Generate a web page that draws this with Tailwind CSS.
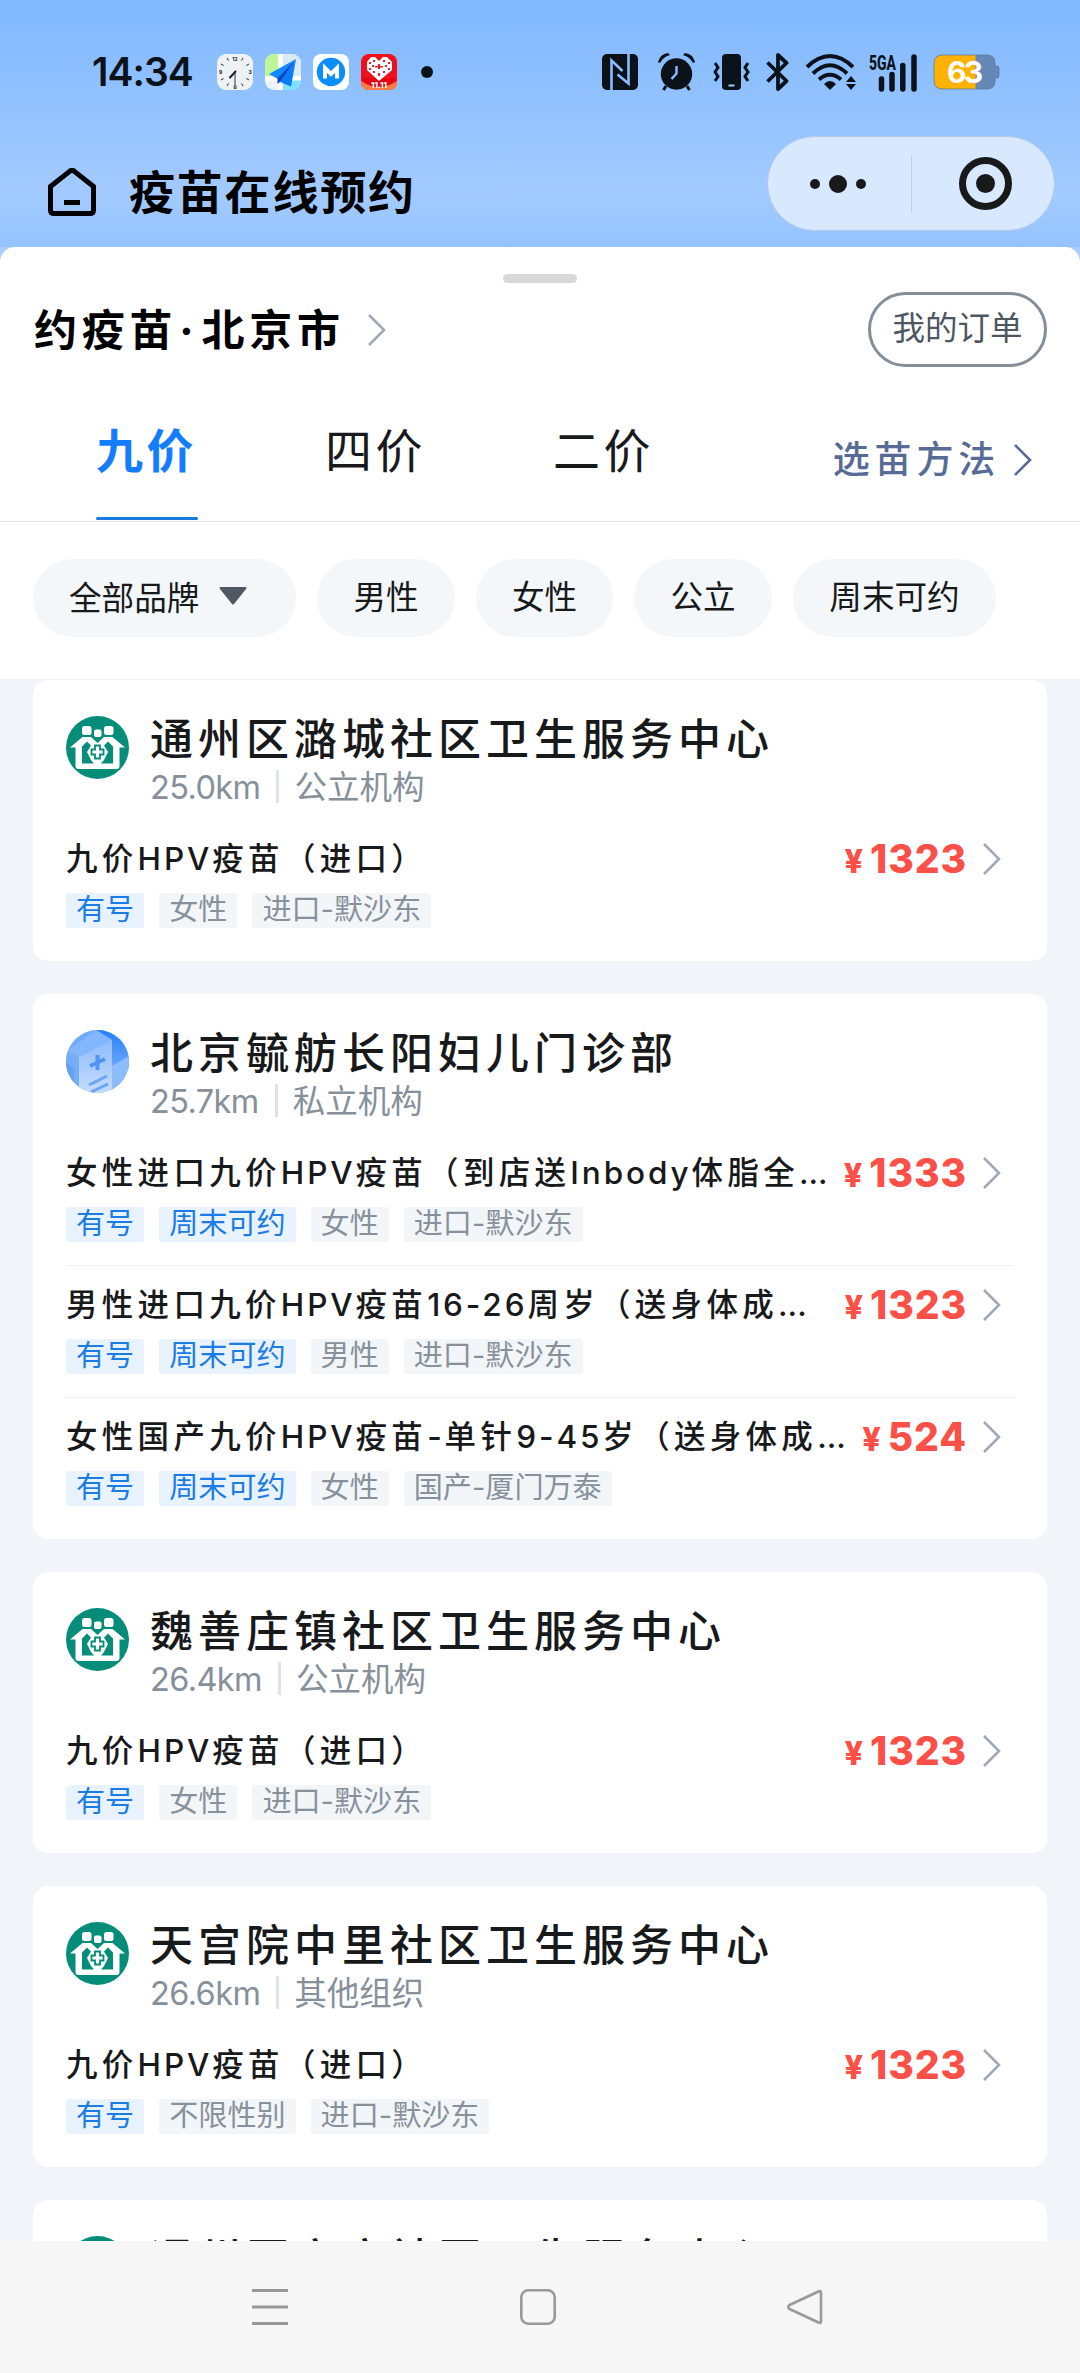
<!DOCTYPE html>
<html lang="zh-CN">
<head>
<meta charset="utf-8">
<title>疫苗在线预约</title>
<script src="https://cdn.jsdelivr.net/npm/@tailwindcss/browser@4"></script>
</head>
<body class="bg-[#f0f4f8]">
<div class="w-[1080px] h-[2373px] overflow-hidden flex flex-col bg-[#a9cdff] text-[#18191b] font-[Inter,'Noto_Sans_CJK_SC',sans-serif] whitespace-nowrap">

  <header class="h-[247px] shrink-0 bg-linear-to-b from-[#80b8ff] via-[#a2caff] via-78% to-[#95c3ff] flex flex-col">
    <!-- status bar -->
    <div class="h-[136px] flex items-center pl-[92px] pr-[80px] pb-2 pt-4">
      <span class="w-[125px] text-[39px] leading-[40px] font-semibold tracking-[-1px] text-[#0b121a]">14:34</span>
      <div class="flex gap-3 items-center">
        <svg class="size-9" viewBox="0 0 36 36"><rect width="36" height="36" rx="9" fill="#eff2f5"/><g stroke="#222" stroke-width="1"><path d="M10 4l1.500 2.600M26 4l-1.500 2.600M4 10l2.600 1.500M32 10l-2.600 1.500M4 26l2.600-1.500M32 26l-2.600-1.500M10 32l1.500-2.600M26 32l-1.500-2.600"/></g><g font-size="5" font-weight="700" text-anchor="middle" fill="#111" font-family="Inter"><text x="18" y="6.500">12</text><text x="33" y="20">3</text><text x="18" y="34.500">6</text><text x="3.500" y="20">9</text></g><path d="M18 18v14" stroke="#777" stroke-width="1.600"/><path d="M18.500 17.500l-5.500 6" stroke="#1a2330" stroke-width="2" stroke-linecap="round"/></svg>
        <svg class="size-9" viewBox="0 0 36 36"><defs><clipPath id="mp"><rect width="36" height="36" rx="9"/></clipPath></defs><g clip-path="url(#mp)"><path fill="#eef3f8" d="M0 0h36v36H0z"/><path fill="#bdf695" d="M0 0h13v23H0z"/><path fill="#7fe3ff" d="M18 26h18v10H18z"/><path fill="#dbe9f2" d="M18 0h18v22H18z"/><path fill="#fff" d="M13 0h4.500v36H13zM0 22h36v4.500H0z"/></g><path fill="#1388ff" d="M31 5L4 20l9 5z"/><path fill="#0a7cf8" d="M31 5L15 28l11 4.500z"/><path fill="#0647c9" d="M31 5L12.500 24.500V30l3.500-3z"/></svg>
        <svg class="size-9" viewBox="0 0 36 36"><rect width="36" height="36" rx="8" fill="#fff"/><circle cx="18" cy="18" r="14.200" fill="#0a8dff"/><path d="M12 24.500V14l6 6 6-6v10.500" fill="none" stroke="#fff" stroke-width="4"/></svg>
        <svg class="size-9" viewBox="0 0 36 36"><rect width="36" height="36" rx="8" fill="#f0101c"/><path d="M0 27q18 12 36 0v1q0 8-8 8H8q-8 0-8-8z" fill="#ff7a45"/><path d="M2 27q16 12 32 0v-3H2z" fill="#e60012"/><path d="M18 27L6 16V8l4-5h4l4 4 4-4h4l5 5v8z" fill="#fff"/><g fill="#e8202a"><path d="M17 10h2v5h-2zM14 12h8v1.500h-8zM8 8h2v2H8zM12 6h2v2h-2zM22 6h2v2h-2zM27 8h2v2h-2zM8 14h2v2H8zM12 17h2v2h-2zM22 17h2v2h-2zM27 14h2v2h-2zM17 19h2v3h-2zM11 11h2v2h-2zM24 11h2v2h-2z"/></g><text x="18" y="34" font-size="8" font-weight="800" text-anchor="middle" fill="#fff" font-family="Inter">11.11</text></svg>
        <span class="ml-3 size-3 rounded-full bg-[#0b121a]"></span>
      </div>
      <div class="ml-auto flex items-center text-[#0b121a]">
        <svg class="w-9 h-9" viewBox="0 0 36 36"><rect width="36" height="36" rx="5" fill="currentColor"/><path d="M9.500 36V6.500L20.500 17M26.500 0v29.500L15.500 20.500" fill="none" stroke="#8abcff" stroke-width="2.600"/></svg>
        <svg class="ml-5 w-[37px] h-[38px]" viewBox="0 0 37 38" fill="none" stroke="currentColor"><circle cx="18.500" cy="21" r="15.700" fill="currentColor" stroke="none"/><path d="M0 9Q2 1 10 0l2 2Q5 4 2 10zM37 9Q35 1 27 0l-2 2q7 2 10 8z" fill="currentColor" stroke="none"/><path d="M8 33l-2.500 4M29 33l2.500 4" stroke-width="3"/><path d="M18.500 13v7.500l-5 5.500" stroke="#8ebfff" stroke-width="2.400"/></svg>
        <svg class="ml-[18px] w-[37px] h-[36px]" viewBox="0 0 37 36"><rect x="9" width="19" height="36" rx="4" fill="currentColor"/><path d="M15.500 31.500h6" stroke="#9fcaff" stroke-width="2"/><path d="M2 8l3 4.500L2 17l3 4.500L2 26M35 8l-3 4.500L35 17l-3 4.500L35 26" transform="translate(0 1)" fill="none" stroke="currentColor" stroke-width="3"/></svg>
        <svg class="ml-4 w-[23px] h-[38px]" viewBox="0 0 23 38"><path d="M1.500 9.500L20.500 28 12 36V2l8.500 8L1.500 28.500" fill="none" stroke="currentColor" stroke-width="3.800" stroke-linejoin="round"/></svg>
        <svg class="ml-4 w-[52px] h-[38px]" viewBox="0 0 52 38" fill="none" stroke="currentColor" stroke-width="4"><path d="M2 14Q25-8 48 14M8 20.500Q25 4 42 20.500M14 26.500Q25 17 36 26.500"/><path d="M19 31q6-6 12 0l-6 6z" fill="currentColor" stroke="none"/><path d="M46 23l5 6H41zM46 37l5-6H41z" fill="currentColor" stroke="none"/></svg>
        <svg class="ml-3 w-[50px] h-[38px] overflow-visible" viewBox="0 0 50 38"><text x="0" y="16.500" font-size="21" font-weight="800" textLength="27" lengthAdjust="spacingAndGlyphs" fill="currentColor" font-family="Roboto">5GA</text><path d="M12.500 36V26M23 36V21.500M33.800 36V12.500M45 36V4" stroke="currentColor" stroke-width="5.500" stroke-linecap="round"/></svg>
        <svg class="ml-[14px] w-[67px] h-[36px]" viewBox="0 0 67 36"><defs><clipPath id="bt"><path d="M10 1h44q8 0 8 8v3h2q2 0 2 2v8q0 2-2 2h-2v3q0 8-8 8H10q-9 0-9-9V10q0-9 9-9z"/></clipPath></defs><g clip-path="url(#bt)"><path fill="#6488b5" d="M0 0h67v36H0z"/><path fill="#ffb300" d="M0 0h42.500v36H0z"/></g><path d="M10 1h44q8 0 8 8v3h2q2 0 2 2v8q0 2-2 2h-2v3q0 8-8 8H10q-9 0-9-9V10q0-9 9-9z" fill="none" stroke="#5a7698" stroke-opacity=".7"/><text x="32" y="29" font-size="30" font-weight="700" text-anchor="middle" textLength="36" fill="#fff" font-family="Inter">63</text></svg>
      </div>
    </div>
    <!-- mini-program title bar -->
    <div class="h-[95px] flex items-center pl-12 pr-[25px]">
      <svg class="mt-4 size-12" viewBox="0 0 48 48" fill="none" stroke="#000" stroke-width="5"><path d="M2.500 18.500L22 3q2-1.200 4 0l19.500 15.500V42q0 3.500-3.500 3.500H6q-3.500 0-3.500-3.500z"/><path d="M16 34.500h16"/></svg>
      <h1 class="ml-[33px] mt-4 text-[46px] leading-[50px] font-bold tracking-[1.800px] text-black">疫苗在线预约</h1>
      <div class="ml-auto h-[95px] w-[288px] rounded-full border border-[#b4c9e6] bg-[#d8e8ff] flex items-center">
        <div class="flex items-center gap-[9px] pl-[42px] w-[143px]">
          <i class="size-[10px] rounded-full bg-[#18191b]"></i><i class="size-[18px] rounded-full bg-[#18191b]"></i><i class="size-[10px] rounded-full bg-[#18191b]"></i>
        </div>
        <div class="w-px h-14 bg-[#bccde4]"></div>
        <div class="ml-[47px] size-[53px] rounded-full border-[7px] border-[#18191b] flex items-center justify-center"><i class="size-[19px] rounded-full bg-[#18191b]"></i></div>
      </div>
    </div>
  </header>

  <section class="h-[432px] shrink-0 bg-white rounded-t-[15px] flex flex-col">
    <div class="h-[45px] pt-[27px] flex justify-center"><div class="h-[9px] w-[74px] rounded-full bg-[#d8d8d8]"></div></div>
    <div class="h-[75px] flex items-center pl-[34px] pr-[33px]">
      <h2 class="flex text-[43px] leading-[50px] font-bold tracking-[4.800px] text-black"><span>约疫苗</span><span class="w-[24px] pr-[6px] text-center tracking-normal">·</span><span>北京市</span></h2>
      <svg class="ml-[23px] w-[18px] h-8" viewBox="0 0 18 32" fill="none" stroke="#a0a9b6" stroke-width="2.600"><path d="M1 1l15 15L1 31"/></svg>
      <button class="ml-auto h-[75px] w-[179px] rounded-full border-[3px] border-[#838e99] text-[32.500px] leading-[40px] text-[#4e5661] pb-px">我的订单</button>
    </div>
    <div class="h-[155px] flex border-b border-[#dde4e9] pl-24">
      <div class="flex gap-[127px] text-[47px] leading-[60px] tracking-[3.500px]">
        <div class="w-[102px] pt-[54px] flex flex-col font-bold text-[#147dff]"><span>九价</span><i class="mt-auto mb-px h-[3px] rounded-full bg-[#1a7bdf]"></i></div>
        <div class="w-[101px] pt-[54px]">四价</div>
        <div class="w-[102px] pt-[54px]">二价</div>
      </div>
      <div class="ml-auto pr-[48px] mt-[68px] h-[50px] flex items-center text-[37px] leading-[50px] font-medium tracking-[4.800px] text-[#566b95]">选苗方法<svg class="ml-[14px] w-[18px] h-8" viewBox="0 0 18 32" fill="none" stroke="currentColor" stroke-width="2.600"><path d="M1 1l15 15L1 31"/></svg></div>
    </div>
    <div class="pt-[37px] pl-[33px] flex gap-[21px] text-[32.600px] leading-[76px]">
      <div class="h-[78px] w-[263px] rounded-full bg-[#f3f7fa] pl-[36px] flex items-center">全部品牌<svg class="ml-5 mb-1 w-[28px] h-[18px]" viewBox="0 0 28 18"><path d="M1 0h26q1 1 0 2L15 17q-1 1-2 0L1 2q-1-1 0-2" fill="#505863"/></svg></div>
      <div class="h-[78px] w-[138px] rounded-full bg-[#f3f7fa] text-center">男性</div>
      <div class="h-[78px] w-[137px] rounded-full bg-[#f3f7fa] text-center">女性</div>
      <div class="h-[78px] w-[138px] rounded-full bg-[#f3f7fa] text-center">公立</div>
      <div class="h-[78px] w-[203px] rounded-full bg-[#f3f7fa] text-center">周末可约</div>
    </div>
  </section>

  <main id="list" class="h-[1562px] shrink-0 overflow-hidden bg-[#f1f5f9] pt-px px-[33px] flex flex-col gap-[33px]"></main>

  <nav class="h-[132px] shrink-0 bg-[#f6f6f6] flex pt-[46px] pl-[250px]">
    <svg class="size-10" viewBox="0 0 40 40" fill="none" stroke="#999" stroke-width="3"><path d="M2 3.500h36M2 20h36M2 36.500h36"/></svg>
    <svg class="ml-[228px] size-10" viewBox="0 0 40 40" fill="none" stroke="#999" stroke-width="2.600"><rect x="3.300" y="3.300" width="33.400" height="33.400" rx="7"/></svg>
    <svg class="ml-[227px] size-10" viewBox="0 0 40 40" fill="none" stroke="#999" stroke-width="2.600" stroke-linejoin="round"><path d="M33.500 4.500q2.500-1.500 2.500 1.500v28q0 3-2.500 1.500L4.500 22q-2.500-2 0-4z"/></svg>
  </nav>
</div>

<template id="public-logo">
  <svg class="mt-px size-[63px] shrink-0" viewBox="0 0 63 63"><circle cx="31.500" cy="31.500" r="31.500" fill="#058d79"/><g fill="#fff"><rect x="16" y="10" width="9.500" height="9" rx="2.500"/><rect x="28" y="13.500" width="7.500" height="7.500" rx="2"/><rect x="38" y="10" width="9.500" height="9" rx="2.500"/><path d="M4 31.500L16.500 21H25l6.500 6 6.500-6h8.500L59 31.500h-5.500V50q0 3-3 3h-38q-3 0-3-3V31.500z"/></g><path d="M16 30.500L21 25.500l4 4-4 6.500 4 8 3 3.500H16zM47 30.500L42 25.500l-4 4 4 6.500-4 8-3 3.500h12z" fill="#058d79"/><path d="M27 30.500q.5-3.500 4.500-3.500t4.500 3.500q4.500 1 4.500 5.500T36 41.500q-.5 4-4.500 4T27 41.500q-4.500-1-4.500-5.500t4.500-5.500z" fill="#fff"/><path d="M29 29.500h5v4h3.500v5H34v4h-5v-4h-3.500v-5H29z" fill="#fff" stroke="#058d79" stroke-width="1.800"/></svg>
</template>
<template id="private-logo">
  <svg class="mt-px size-[63px] shrink-0" viewBox="0 0 63 63"><defs><clipPath id="pv"><circle cx="31.500" cy="31.500" r="31.500"/></clipPath><linearGradient id="pg" x1="0" y1="0" x2="0" y2="1"><stop stop-color="#8fbcfb"/><stop offset="1" stop-color="#c4dcff"/></linearGradient><linearGradient id="pr" x1="0" y1="0" x2="0" y2="1"><stop stop-color="#2280fb"/><stop offset="1" stop-color="#6fabfa"/></linearGradient></defs><g clip-path="url(#pv)"><path fill="#6fabfa" d="M0 0h63v63H0z"/><path fill="url(#pr)" d="M30 0h33v40H46V10z"/><path fill="#8dbcfb" d="M46 36l17-10v37H46z"/><path fill="#82b6fd" d="M0 22L30 0l16 10-33 17z"/><path fill="#74aefa" d="M0 21l13 6v31L0 48z"/><path fill="#649ff0" d="M0 33l8 4v22L0 50z"/><path fill="url(#pg)" d="M13 27L46 10v53H13z"/><path d="M31.500 25v15M24 36l15-7" stroke="#4e95f6" stroke-width="4"/><path d="M23 55l18-9M25 62l17-8" stroke="#6aa5f7" stroke-width="3"/></g></svg>
</template>

<script>
const data = [
  {name:'通州区潞城社区卫生服务中心', km:'25.0km', kind:'公立机构', items:[{t:'九价HPV疫苗（进口）', p:'1323', tags:['有号','女性','进口-默沙东']}]},
  {name:'北京毓舫长阳妇儿门诊部', km:'25.7km', kind:'私立机构', logo:'private', items:[
    {t:'女性进口九价HPV疫苗（到店送Inbody体脂全...', p:'1333', tags:['有号','周末可约','女性','进口-默沙东']},
    {t:'男性进口九价HPV疫苗16-26周岁（送身体成...', p:'1323', tags:['有号','周末可约','男性','进口-默沙东']},
    {t:'女性国产九价HPV疫苗-单针9-45岁（送身体成...', p:'524', tags:['有号','周末可约','女性','国产-厦门万泰']}]},
  {name:'魏善庄镇社区卫生服务中心', km:'26.4km', kind:'公立机构', items:[{t:'九价HPV疫苗（进口）', p:'1323', tags:['有号','女性','进口-默沙东']}]},
  {name:'天宫院中里社区卫生服务中心', km:'26.6km', kind:'其他组织', items:[{t:'九价HPV疫苗（进口）', p:'1323', tags:['有号','不限性别','进口-默沙东']}]},
  {name:'通州区宋庄社区卫生服务中心'},
];
const blue = ['有号','周末可约'];
const logo = id => document.getElementById(id + '-logo').innerHTML;
const latin = s => s.replace(/\.\.\./g, '<span class="tracking-[0px]">...</span>').replace(/HPV|Inbody|[0-9]+-[0-9]+|-(?=单)/g, m => `<span class="tracking-[2.900px]">${m}</span>`);
const tag = s => blue.includes(s)
  ? `<span class="h-[35px] px-[10px] rounded-[3px] bg-[#e9f3ff] text-[#1b7ce6]">${s}</span>`
  : `<span class="h-[35px] px-[10px] rounded-[3px] bg-[#f3f6f9] text-[#87919c]">${s}</span>`;
const item = (it, i) => `
  <div class="${i ? 'border-t border-[#edf1f4] pt-[19px]' : ''} pb-[23px]">
    <div class="h-10 flex items-center">
      <div class="text-[31.500px] leading-[40px] font-medium tracking-[4.300px]">${latin(it.t)}</div>
      <div class="ml-auto pt-[3px] flex items-baseline text-[#fb4f48] font-bold">
        <span class="text-[32px] leading-[40px] mr-[7px] font-extrabold">¥</span><span class="text-[39px] leading-[40px] font-extrabold tracking-[0.900px]">${it.p}</span>
      </div>
      <svg class="ml-[16px] mr-[13px] w-[18px] h-8" viewBox="0 0 18 32" fill="none" stroke="#a0a9b6" stroke-width="2.600"><path d="M1 1l15 15L1 31"/></svg>
    </div>
    <div class="mt-[14px] flex gap-[15px] text-[29.100px] leading-[34px]">${it.tags.map(tag).join('')}</div>
  </div>`;
document.getElementById('list').innerHTML = data.map(c => `
  <article class="shrink-0 bg-white rounded-[15px] pt-[35px] px-[33px] pb-[10px]">
    <div class="flex h-[124px]">
      ${logo(c.logo || 'public')}
      <div class="ml-[21px]">
        <h3 class="text-[43px] leading-[48px] font-medium tracking-[5px]">${c.name}</h3>
        ${c.km ? `<div class="mt-[5px] h-10 flex items-center text-[32.500px] leading-[40px] text-[#85909b]">
          <span class="tracking-[-0.600px]">${c.km}</span><i class="ml-4 mr-[15px] mb-1 w-[3px] h-[33px] bg-[#dde3e8]"></i><span>${c.kind}</span>
        </div>` : ''}
      </div>
    </div>
    ${(c.items || []).map(item).join('')}
  </article>`).join('');
</script>
</body>
</html>
